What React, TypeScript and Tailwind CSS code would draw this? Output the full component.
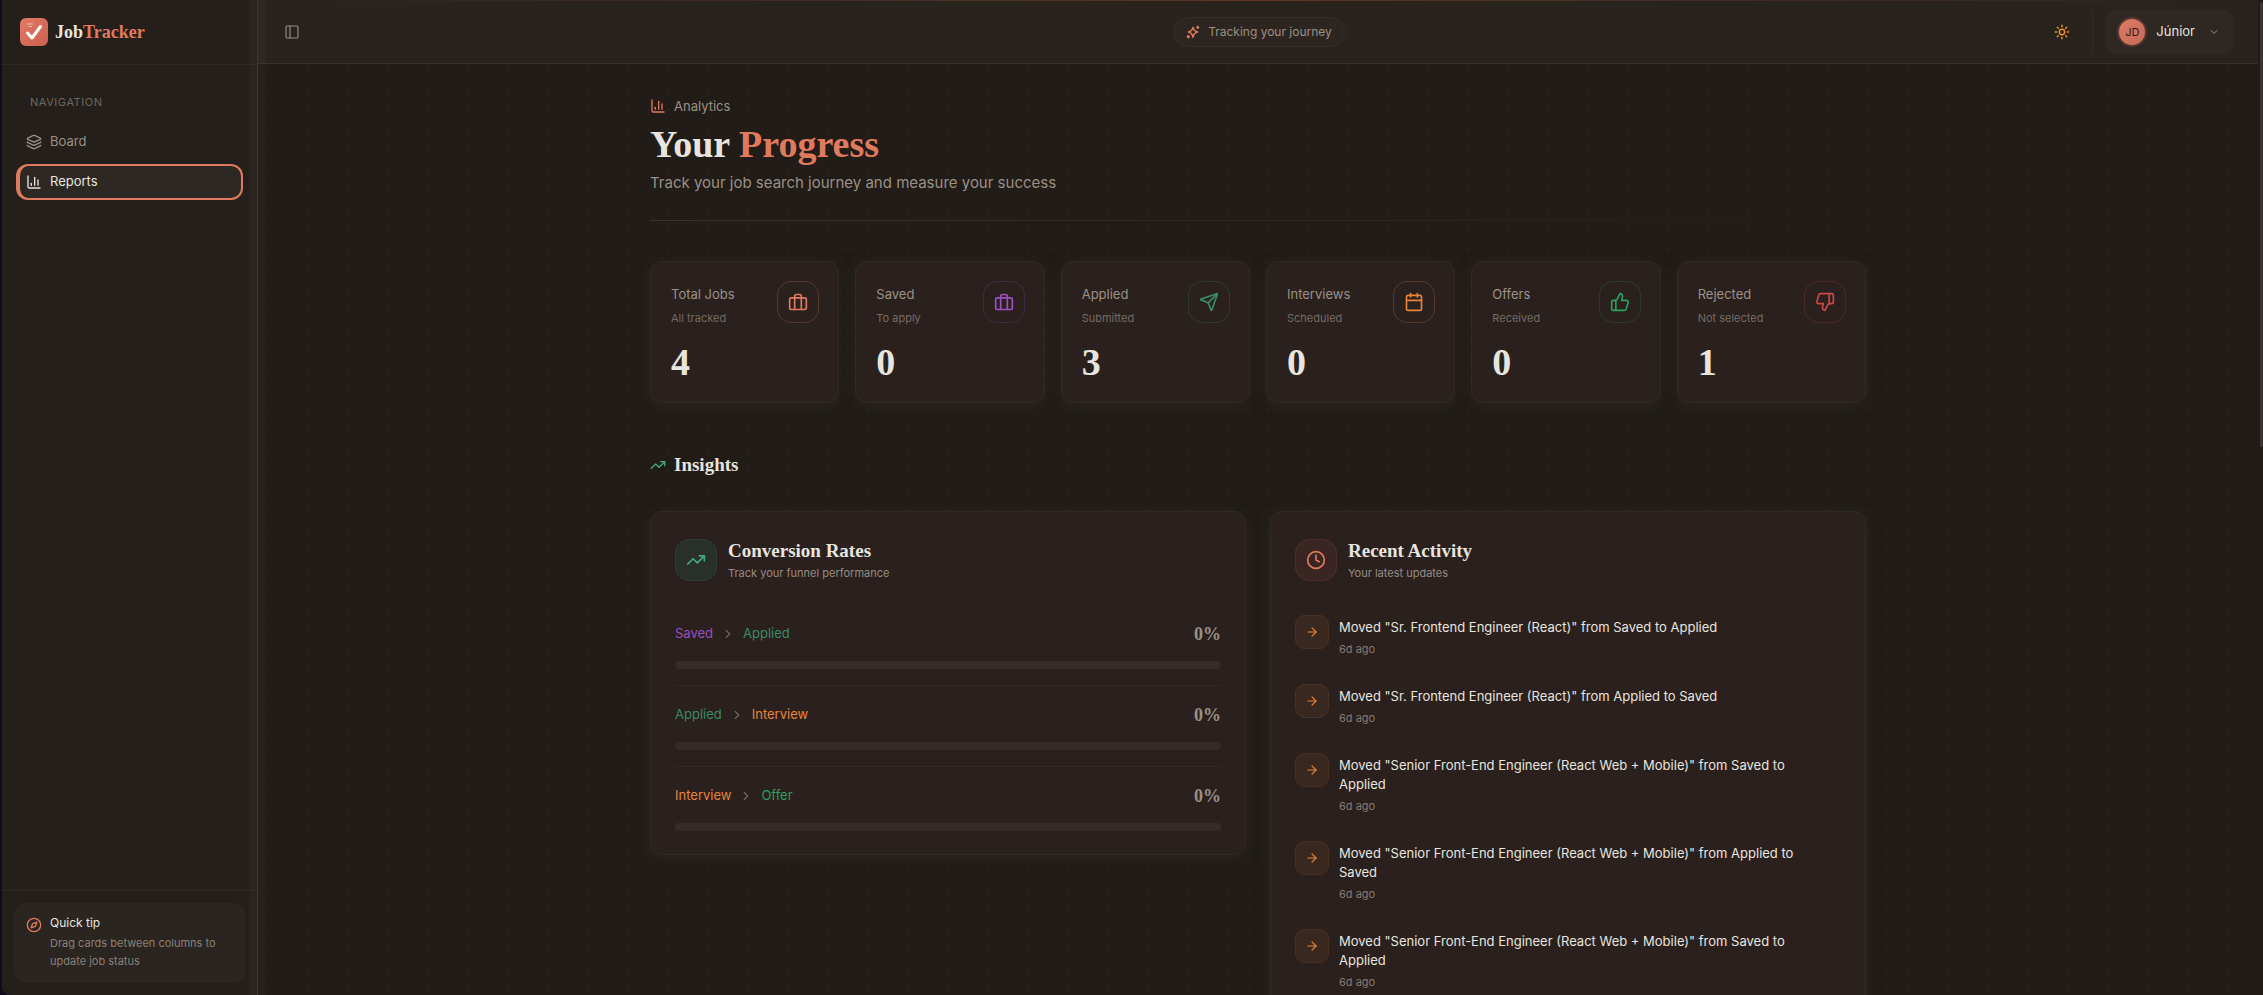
import React from "react";
import {
  ArrowRight, Calendar, ChevronDown, ChevronRight, Clock, Compass, Layers,
  PanelLeft, Send, ThumbsDown, ThumbsUp, TrendingUp,
} from "lucide-react";

type IconProps = { className?: string };

const serif = "font-['Liberation_Serif',serif]";

function BarsIcon({ className }: IconProps) {
  return (
    <svg viewBox="0 0 24 24" fill="none" stroke="currentColor" strokeWidth="2" strokeLinecap="round" strokeLinejoin="round" className={className} aria-hidden="true">
      <path d="M3 3v16a2 2 0 0 0 2 2h16" />
      <path d="M18 17V9" />
      <path d="M13 17V5" />
      <path d="M8 17v-3" />
    </svg>
  );
}

function BriefcaseIcon({ className }: IconProps) {
  return (
    <svg viewBox="0 0 24 24" fill="none" stroke="currentColor" strokeWidth="2" strokeLinecap="round" strokeLinejoin="round" className={className} aria-hidden="true">
      <rect x="2" y="7" width="20" height="14" rx="2" />
      <path d="M16 21V5a2 2 0 0 0-2-2h-4a2 2 0 0 0-2 2v16" />
    </svg>
  );
}

function SparklesIcon({ className }: IconProps) {
  return (
    <svg viewBox="0 0 24 24" fill="none" stroke="currentColor" strokeWidth="2.4" strokeLinecap="round" strokeLinejoin="round" className={className} aria-hidden="true">
      <path d="M12 4c1 4.500 3 7 8 8-5 1-7 3.500-8 9-1-5.500-3-8-8-9 5-1 7-3.500 8-8Z" />
      <path d="M20 2v4M22 4h-4" />
      <circle cx="4" cy="20" r="1.500" />
    </svg>
  );
}

function SunIcon({ className }: IconProps) {
  return (
    <svg viewBox="0 0 24 24" fill="none" stroke="currentColor" strokeWidth="2.2" strokeLinecap="round" className={className} aria-hidden="true">
      <circle cx="12" cy="12" r="4" />
      <path d="M12 2v2M12 20v2M4.930 4.930l1.410 1.410M17.660 17.660l1.410 1.410M2 12h2M20 12h2M6.340 17.660l-1.410 1.410M19.070 4.930l-1.410 1.410" />
    </svg>
  );
}

function Logo() {
  return (
    <svg viewBox="0 0 28 28" className="size-7 shrink-0" aria-hidden="true">
      <defs>
        <linearGradient id="logo-fill" x1="0" y1="0" x2="1" y2="1">
          <stop offset="0" stopColor="#e07a66" />
          <stop offset="1" stopColor="#cc604e" />
        </linearGradient>
      </defs>
      <rect width="28" height="28" rx="6" fill="url(#logo-fill)" />
      <path d="M7 6h6M8.500 8.500h3.500" stroke="#fff" strokeOpacity="0.550" strokeWidth="1.200" />
      <path d="M7.500 15l4.500 5L20.500 8.500" fill="none" stroke="#fff" strokeWidth="3" strokeLinecap="round" strokeLinejoin="round" />
    </svg>
  );
}

const stats = [
  { label: "Total Jobs", note: "All tracked", value: 4, Icon: BriefcaseIcon, tone: "text-[#e07a5f] border-[#e07a5f]/25" },
  { label: "Saved", note: "To apply", value: 0, Icon: BriefcaseIcon, tone: "text-[#9b4fc0] border-[#9b4fc0]/20" },
  { label: "Applied", note: "Submitted", value: 3, Icon: Send, tone: "text-[#3a8a68] border-[#3d9970]/20" },
  { label: "Interviews", note: "Scheduled", value: 0, Icon: Calendar, tone: "text-[#e8833a] border-[#e8833a]/25" },
  { label: "Offers", note: "Received", value: 0, Icon: ThumbsUp, tone: "text-[#2f9e5f] border-[#2f9e5f]/20" },
  { label: "Rejected", note: "Not selected", value: 1, Icon: ThumbsDown, tone: "text-[#d04545] border-[#d04545]/20" },
];

const rates = [
  { from: "Saved", to: "Applied", fromTone: "text-[#9b4fc0]", toTone: "text-[#388a66]", percent: 0 },
  { from: "Applied", to: "Interview", fromTone: "text-[#388a66]", toTone: "text-[#e8833a]", percent: 0 },
  { from: "Interview", to: "Offer", fromTone: "text-[#e8833a]", toTone: "text-[#2f9e5f]", percent: 0 },
];

const senior = 'Moved "Senior Front-End Engineer (React Web + Mobile)" from ';
const activity = [
  { text: 'Moved "Sr. Frontend Engineer (React)" from Saved to Applied', when: "6d ago" },
  { text: 'Moved "Sr. Frontend Engineer (React)" from Applied to Saved', when: "6d ago" },
  { text: senior + "Saved to Applied", when: "6d ago" },
  { text: senior + "Applied to Saved", when: "6d ago" },
  { text: senior + "Saved to Applied", when: "6d ago" },
];

function Sidebar() {
  return (
    <aside className="relative z-10 flex w-64 shrink-0 flex-col border-r border-[#38332e] bg-[#241f1b]">
      <div className="flex h-[65px] shrink-0 items-center gap-[7px] border-b border-[#2d2925] px-[18px]">
        <Logo />
        <span className={`${serif} text-lg font-bold leading-6 text-[#e8e4df]`}>
          Job<span className="text-[#e07a5f]">Tracker</span>
        </span>
      </div>
      <nav className="flex flex-col px-[14px] pt-[25px]">
        <h2 className="mb-[10px] px-[14px] text-[11px] leading-6 tracking-wider text-[#6f675f]">NAVIGATION</h2>
        <a href="#board" className="mb-1 flex h-9 items-center gap-2 px-[10px] text-[13px] text-[#9a9085]">
          <Layers className="size-4" />
          Board
        </a>
        <a href="#reports" aria-current="page" className="flex h-9 items-center gap-2 rounded-xl border-2 border-l-4 border-[#e07a5f] bg-[#2d2823] pl-[6px] text-[13px] text-[#e8e4df]">
          <BarsIcon className="size-4" />
          Reports
        </a>
      </nav>
      <div className="mt-auto border-t border-[#2d2925] p-3">
        <div className="flex h-20 gap-2 rounded-xl bg-[#2a2521] px-3 py-3">
          <Compass className="mt-[2px] size-4 shrink-0 text-[#e07a5f]" />
          <div>
            <p className="text-xs leading-4 text-[#e8e4df]">Quick tip</p>
            <p className="mt-[3px] text-[11px] leading-[18px] text-[#8a8076]">Drag cards between columns to update job status</p>
          </div>
        </div>
      </div>
      <button type="button" aria-label="Collapse sidebar" className="absolute inset-y-0 -right-2 w-4 bg-white/[0.025]" />
    </aside>
  );
}

function TopBar() {
  return (
    <div className="shrink-0">
      <div className="h-px bg-gradient-to-r from-[#28231d] via-[#5c3429] to-[#28231d]" />
      <header className="flex h-[63px] items-center justify-between border-b border-[#36312b] bg-[#28231d] pr-6 pl-[26px]">
        <div className="flex flex-1">
          <button type="button" aria-label="Toggle sidebar" className="text-[#9a9085]">
            <PanelLeft className="size-4" strokeWidth={1.7} />
          </button>
        </div>
        <p className="flex h-[30px] items-center gap-2 rounded-full border border-[#352d28] bg-[#2d2520] px-3 text-xs text-[#9a9085]">
          <SparklesIcon className="size-[14px] text-[#e07a5f]" />
          Tracking your journey
        </p>
        <div className="flex flex-1 items-center justify-end">
          <button type="button" aria-label="Change theme" className="mr-[22px] text-[#e8912d]">
            <SunIcon className="size-4" />
          </button>
          <div className="mr-3 h-[46px] w-px bg-[#322c27]" />
          <button type="button" className="flex h-[46px] items-center gap-[9px] rounded-xl bg-[#2f2722] pr-[14px] pl-3 text-[13px] text-[#e8e4df]">
            <span className="flex size-[30px] items-center justify-center rounded-full border-2 border-[#56372e] bg-gradient-to-br from-[#e07a66] to-[#c56a58] text-[11px] text-[#2a1d19]">JD</span>
            Júnior
            <ChevronDown className="ml-1 size-3 text-[#9a9085]" />
          </button>
        </div>
      </header>
    </div>
  );
}

const panel = "rounded-xl border border-[#302a25] bg-[#2a211e] shadow-[0_3px_14px_rgba(52,46,38,0.500)]";

function PanelHeader({ tone, title, note, children }: { tone: string; title: string; note: string; children: React.ReactNode }) {
  return (
    <div className="flex items-center gap-[11px]">
      <div className={`flex size-[42px] items-center justify-center rounded-[14px] border ${tone}`}>{children}</div>
      <div className="pt-[3px]">
        <h3 className={`${serif} text-[19px] font-bold leading-6 text-[#e8e4df]`}>{title}</h3>
        <p className="text-[11px] leading-5 text-[#968b80]">{note}</p>
      </div>
    </div>
  );
}

export default function App() {
  return (
    <div className="h-screen bg-[#100c1c] pl-[2px] font-['Inter',sans-serif] text-[#e8e4df]">
      <div className="flex h-full overflow-hidden rounded-bl-lg bg-[#211c18]">
        <Sidebar />
        <div className="flex min-w-0 flex-1 flex-col bg-[radial-gradient(#282320_1px,transparent_1px)] bg-[length:20px_20px]">
          <TopBar />
          <main className="min-h-0 flex-1 overflow-hidden">
            <div className="mx-auto max-w-[1280px] px-8 pt-8">
              <div className="flex items-center gap-2 text-[13px] leading-5 text-[#9a9085]">
                <BarsIcon className="size-4 text-[#e07a5f]" />
                Analytics
              </div>
              <h1 className={`${serif} mt-2 text-[38px] font-bold leading-10`}>
                Your <span className="text-[#e07a5f]">Progress</span>
              </h1>
              <p className="mt-[7px] text-[15px] leading-6 text-[#9a9085]">Track your job search journey and measure your success</p>
              <div className="mt-[25px] h-px bg-gradient-to-r from-[#38332e] to-transparent" />

              <section className="mt-10 grid grid-cols-6 gap-4" aria-label="Totals">
                {stats.map(({ label, note, value, Icon, tone }) => (
                  <article key={label} className={`${panel} h-[142px] pt-[19px] pr-[19px] pl-5`}>
                    <div className="flex justify-between">
                      <div className="pt-px">
                        <h2 className="text-[13px] leading-6 text-[#9a9085]">{label}</h2>
                        <p className="text-[11px] leading-6 text-[#746b63]">{note}</p>
                      </div>
                      <div className={`flex size-[42px] items-center justify-center rounded-[14px] border ${tone}`}>
                        <Icon className="size-5" />
                      </div>
                    </div>
                    <p className={`${serif} mt-3 text-[38px] font-bold leading-10`}>{value}</p>
                  </article>
                ))}
              </section>

              <h2 className={`${serif} mt-12 flex items-center gap-2 text-[19px] font-bold leading-7`}>
                <TrendingUp className="size-4 text-[#45a882]" />
                Insights
              </h2>

              <div className="mt-8 grid grid-cols-2 items-start gap-6">
                <section className={`${panel} h-[344px] px-6 pt-6`}>
                  <PanelHeader tone="border-[#2f4036] bg-[#29302a] text-[#45a882]" title="Conversion Rates" note="Track your funnel performance">
                    <TrendingUp className="size-5" />
                  </PanelHeader>
                  <div className="mt-[37px] divide-y divide-[#302b27]">
                    {rates.map((rate) => (
                      <div key={rate.from} className="h-[81px] pt-[15px] first:h-[66px] first:pt-0">
                        <div className="flex h-7 items-center gap-2 text-[13px]">
                          <span className={rate.fromTone}>{rate.from}</span>
                          <ChevronRight className="size-[14px] text-[#6f675f]" />
                          <span className={rate.toTone}>{rate.to}</span>
                          <span className={`${serif} ml-auto text-lg font-bold text-[#9a9085]`}>{rate.percent}%</span>
                        </div>
                        <div className="mt-[13px] h-2 overflow-hidden rounded-full bg-[#352b28]">
                          <div className="h-full bg-[#388a66]" style={{ width: `${rate.percent}%` }} />
                        </div>
                      </div>
                    ))}
                  </div>
                </section>

                <section className={`${panel} px-6 pt-6 pb-10`}>
                  <PanelHeader tone="border-[#4d2f29] bg-[#392622] text-[#e07a5f]" title="Recent Activity" note="Your latest updates">
                    <Clock className="size-5" />
                  </PanelHeader>
                  <ul className="mt-8 flex flex-col gap-[26px]">
                    {activity.map((item, index) => (
                      <li key={index} className="flex gap-[10px]">
                        <div className="flex size-[34px] shrink-0 items-center justify-center rounded-[10px] border border-[#4b3122] bg-[#39281f] text-[#e8833a]">
                          <ArrowRight className="size-[14px]" />
                        </div>
                        <div className="max-w-[480px] pt-[3px]">
                          <p className="text-[13px] leading-[19px]">{item.text}</p>
                          <p className="mt-[3px] text-[11px] leading-[18px] text-[#857a70]">{item.when}</p>
                        </div>
                      </li>
                    ))}
                  </ul>
                </section>
              </div>
            </div>
          </main>
        </div>
        <div className="w-[5px] shrink-0 pt-[2px] pl-[2px]">
          <div className="h-[445px] rounded-full bg-[#3a3532]" />
        </div>
      </div>
    </div>
  );
}
